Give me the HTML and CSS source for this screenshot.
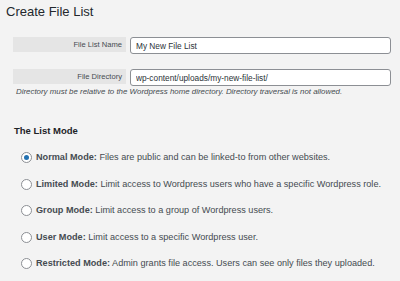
FILE: index.html
```html
<!DOCTYPE html>
<html lang="en">
<head>
    <meta charset="UTF-8">
    <title>Create File List</title>
    <link rel="stylesheet" href="styles.css">
</head>
<body>
    <div class="wrap">
        <h1 class="titulo">Create File List</h1>

        <div class="campo">
            <label class="campo_label" for="nome">File List Name</label>
            <input class="campo_input" type="text" id="nome" value="My New File List">
        </div>
        <div class="campo campo_dir">
            <label class="campo_label" for="dir">File Directory</label>
            <input class="campo_input" type="text" id="dir" value="wp-content/uploads/my-new-file-list/">
        </div>
        <p class="dica">Directory must be relative to the Wordpress home directory. Directory traversal is not allowed.</p>

        <h2 class="secao">The List Mode</h2>
        <ul class="modos">
            <li><label><input type="radio" name="modo" checked><span><b>Normal Mode:</b> Files are public and can be linked-to from other websites.</span></label></li>
            <li><label><input type="radio" name="modo"><span><b>Limited Mode:</b> Limit access to Wordpress users who have a specific Wordpress role.</span></label></li>
            <li><label><input type="radio" name="modo"><span><b>Group Mode:</b> Limit access to a group of Wordpress users.</span></label></li>
            <li><label><input type="radio" name="modo"><span><b>User Mode:</b> Limit access to a specific Wordpress user.</span></label></li>
            <li><label><input type="radio" name="modo"><span><b>Restricted Mode:</b> Admin grants file access. Users can see only files they uploaded.</span></label></li>
        </ul>
    </div>
</body>
</html>
```

FILE: styles.css
```css
html, body {
    margin: 0;
    background-color: #f3f3f3;
    color: #454b51;
    font-family: "Liberation Sans", Arial, sans-serif;
}
.wrap {
    padding: 3px 6px 0 6px;
}
.titulo {
    font-size: 13px;
    font-weight: normal;
    line-height: 17px;
    margin: 0 0 17px 0;
    color: #23282d;
}
.campo {
    display: flex;
    align-items: flex-start;
    gap: 4px;
    padding-left: 7px;
}
.campo_dir {
    margin-top: 15px;
}
.campo_label {
    width: 109px;
    height: 15px;
    line-height: 15px;
    background-color: #e5e5e5;
    text-align: right;
    padding-right: 4px;
    font-size: 7.6px;
}
.campo_input {
    width: 261px;
    height: 17px;
    box-sizing: border-box;
    border: 1px solid #8c8f94;
    border-radius: 3px;
    background: #fff;
    padding: 0 5px;
    font-family: "Liberation Sans", Arial, sans-serif;
    font-size: 8.3px;
    color: #2c3338;
    margin: 0;
}
.dica {
    font-size: 7.9px;
    font-style: italic;
    margin: 1px 0 0 10px;
    line-height: 10px;
}
.secao {
    font-size: 9.5px;
    font-weight: bold;
    margin: 28px 0 0 8px;
    line-height: 12px;
    color: #1d2327;
}
.modos {
    list-style: none;
    margin: 14px 0 0 0;
    padding: 0 0 0 15px;
}
.modos li {
    font-size: 9.15px;
    height: 26.5px;
    line-height: 13px;
}
.modos label {
    display: flex;
    align-items: center;
    gap: 4px;
}
.modos input[type=radio] {
    appearance: none;
    -webkit-appearance: none;
    width: 11px;
    height: 11px;
    margin: 0;
    border: 1px solid #8c8f94;
    border-radius: 50%;
    background: #fff;
    display: grid;
    place-content: center;
    box-sizing: border-box;
    flex: none;
}
.modos input[type=radio]:checked::before {
    content: "";
    width: 5px;
    height: 5px;
    border-radius: 50%;
    background-color: #2271b1;
}
```
